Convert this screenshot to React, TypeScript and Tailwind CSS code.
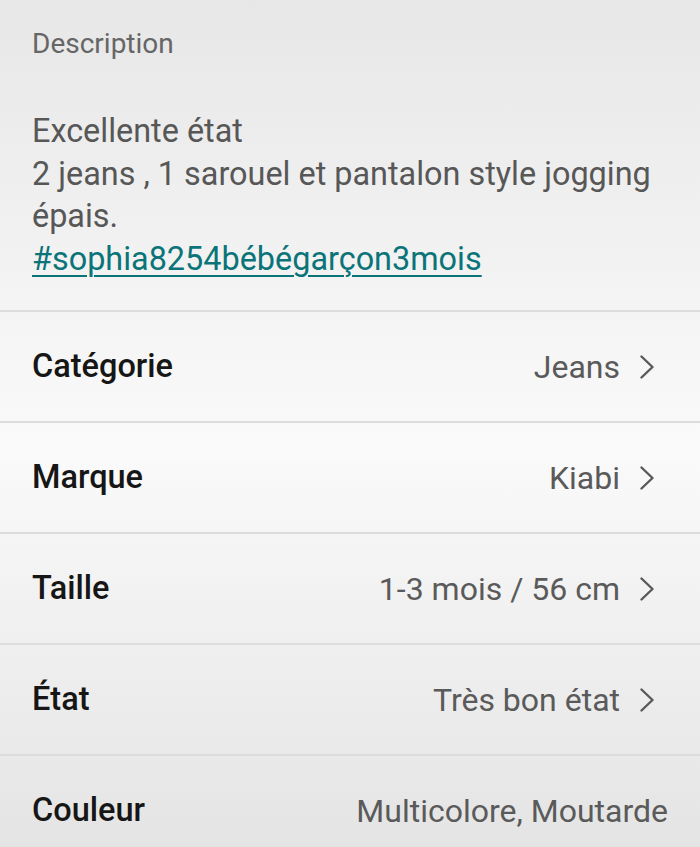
import React from "react"

const rows = [
  { label: "Catégorie", value: "Jeans", chevron: true },
  { label: "Marque", value: "Kiabi", chevron: true },
  { label: "Taille", value: "1-3 mois / 56 cm", chevron: true },
  { label: "État", value: "Très bon état", chevron: true },
  { label: "Couleur", value: "Multicolore, Moutarde", chevron: false },
]

function Chevron() {
  return (
    <svg width="14" height="24" viewBox="0 0 14 24" fill="none" className="ml-5 mr-[46px] shrink-0">
      <path d="M1.5 1.5 L12.5 12 L1.5 22.5" stroke="#595959" strokeWidth="2.4" strokeLinecap="round" strokeLinejoin="round" />
    </svg>
  )
}

export default function App() {
  return (
    <div
      className="min-h-[847px] w-full bg-linear-to-b from-[#e7e7e7] via-[#fafafa] via-52% to-[#e3e3e3] overflow-hidden"
      style={{ fontFamily: "Roboto, 'Noto Sans', sans-serif" }}
    >
      {/* Description */}
      <section className="px-8 pt-[28px] pb-[30px]">
        <h2 className="text-[28px] leading-[32px] text-[#666666]">Description</h2>
        <div className="mt-[50px] text-[32.4px] leading-[42.5px] text-[#575757]">
          <p>Excellente état</p>
          <p>2 jeans , 1 sarouel et pantalon style jogging</p>
          <p>épais.</p>
          <a href="#" className="text-[#0a7479] underline underline-offset-[5px] decoration-[2px]">
            #sophia8254bébégarçon3mois
          </a>
        </div>
      </section>

      {/* Attributes */}
      {rows.map((row) => (
        <div
          key={row.label}
          className="flex h-[111px] items-center border-t-2 border-[#dcdcdc] pl-8"
        >
          <span className="text-[32.5px] font-medium text-[#161616]">{row.label}</span>
          <div className="ml-auto flex items-center">
            <span className={`text-[32px] text-[#5a5a5a] ${row.chevron ? "" : "mr-8"}`}>{row.value}</span>
            {row.chevron && <Chevron />}
          </div>
        </div>
      ))}
    </div>
  )
}
